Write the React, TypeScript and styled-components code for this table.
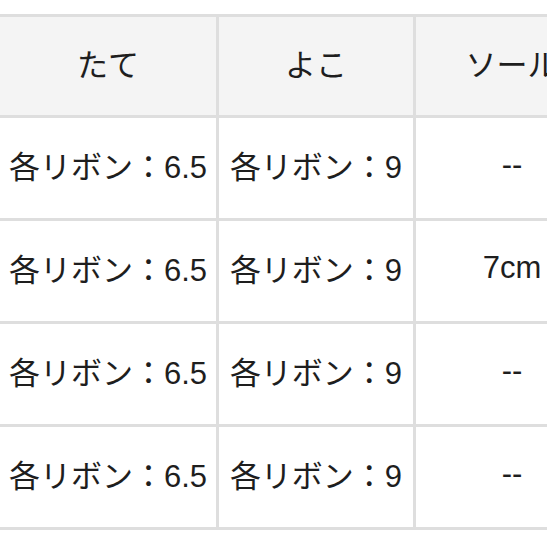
import React from 'react';
import styled, { createGlobalStyle } from 'styled-components';

const GlobalStyle = createGlobalStyle`
  html, body {
    margin: 0;
    padding: 0;
    background: #fff;
    overflow: hidden;
  }
  body {
    font-family: "Liberation Sans", "Noto Sans CJK JP", sans-serif;
  }
`;

const Page = styled.div`
  width: 547px;
  height: 547px;
  overflow: hidden;
  padding-top: 14px;
  box-sizing: border-box;
`;

const Table = styled.div`
  display: grid;
  grid-template-columns: 216px 194px 192px;
  grid-template-rows: 98px repeat(4, 100px);
  gap: 3px;
  padding: 3px 0;
  background: #dedede;
  width: max-content;
`;

const Cell = styled.div<{ $head?: boolean }>`
  display: flex;
  align-items: center;
  justify-content: center;
  padding-bottom: 7px;
  box-sizing: border-box;
  background: ${p => (p.$head ? '#f4f4f4' : '#fff')};
  color: #1e1e1e;
  font-size: 31px;
  white-space: nowrap;
`;

const headers = ['たて', 'よこ', 'ソール'];
const rows = [
  ['各リボン：6.5', '各リボン：9', '--'],
  ['各リボン：6.5', '各リボン：9', '7cm'],
  ['各リボン：6.5', '各リボン：9', '--'],
  ['各リボン：6.5', '各リボン：9', '--'],
];

export default function App() {
  return (
    <>
      <GlobalStyle />
      <Page>
        <Table>
          {headers.map(h => (
            <Cell key={h} $head>{h}</Cell>
          ))}
          {rows.map((r, i) =>
            r.map((c, j) => <Cell key={`${i}-${j}`}>{c}</Cell>)
          )}
        </Table>
      </Page>
    </>
  );
}
